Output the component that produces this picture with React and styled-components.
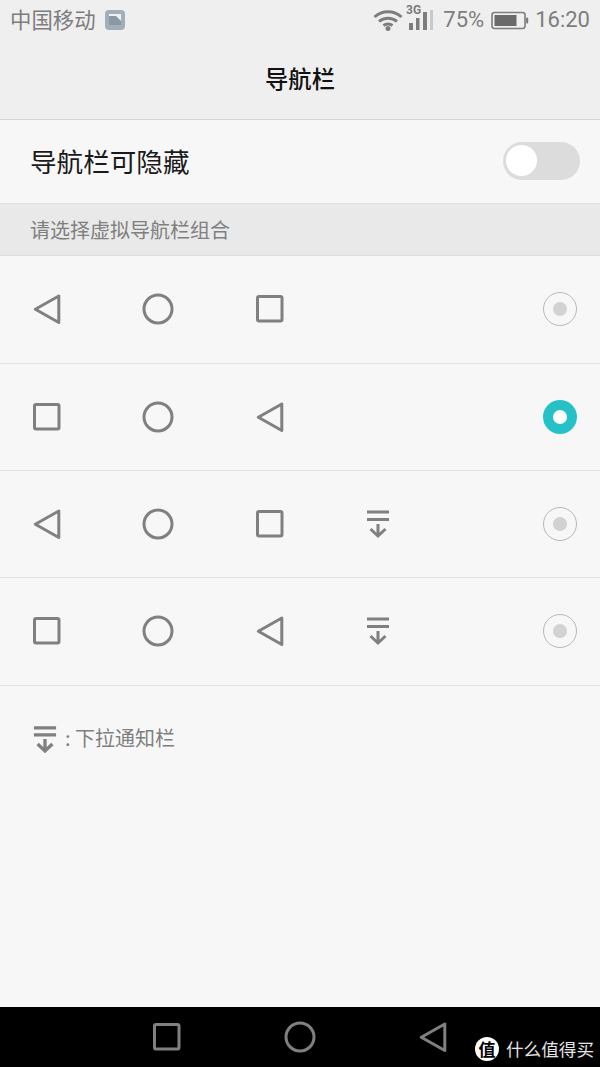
import React from 'react';
import styled, { createGlobalStyle } from 'styled-components';

const FONT = '"Noto Sans CJK SC", "Roboto", "Liberation Sans", sans-serif';

const GlobalStyle = createGlobalStyle`
  html, body {
    margin: 0;
    padding: 0;
    background: #f7f7f7;
    font-family: ${FONT};
  }
`;

const Page = styled.div`
  width: 600px;
  height: 1067px;
  display: flex;
  flex-direction: column;
  overflow: hidden;
  background: #f7f7f7;
`;

const Header = styled.header`
  height: 120px;
  flex: none;
  box-sizing: border-box;
  background: #efefef;
  border-bottom: 1px solid #d6d6d6;
`;

const StatusBar = styled.div`
  height: 40px;
  display: flex;
  align-items: center;
  justify-content: space-between;
  padding: 0 10px 0 10px;
  color: #7d7d7d;
`;

const StatusGroup = styled.div`
  display: flex;
  align-items: center;
`;

const Carrier = styled.span`
  font-size: 21.4px;
  line-height: 38px;
  margin: 0 9px 2px 0;
`;

const StatusText = styled.span`
  font-family: Roboto, "Liberation Sans", sans-serif;
  font-size: 22px;
  line-height: 42px;
  margin-left: ${p => p.$gap}px;
`;

const StatusIcon = styled.span`
  display: flex;
  margin-left: ${p => p.$gap || 0}px;
  margin-top: ${p => p.$top || 0}px;
`;

const Title = styled.h1`
  margin: 0;
  height: 79px;
  line-height: 76px;
  text-align: center;
  font-size: 23.3px;
  font-weight: 500;
  color: #111;
`;

const ToggleRow = styled.div`
  height: 83px;
  flex: none;
  box-sizing: border-box;
  display: flex;
  align-items: center;
  justify-content: space-between;
  padding: 0 20px 1px 30px;
  color: #1a1a1a;
`;

const ToggleLabel = styled.span`
  font-size: 26.6px;
  margin-bottom: 2px;
`;

const Toggle = styled.div`
  width: 77px;
  height: 38px;
  box-sizing: border-box;
  border-radius: 19px;
  background: #dcdcdc;
  padding: 3px;
  display: flex;
`;

const Knob = styled.div`
  width: 31px;
  height: 31px;
  border-radius: 50%;
  background: #fff;
`;

const SectionLabel = styled.div`
  height: 53px;
  flex: none;
  box-sizing: border-box;
  background: #e9e9e9;
  border-top: 1px solid #e0e0e0;
  border-bottom: 1px solid #dedede;
  padding-left: 30px;
  line-height: 52px;
  font-size: 20px;
  color: #7f7f7f;
`;

const Row = styled.div`
  height: ${p => p.$height}px;
  padding-bottom: ${p => p.$height - 107}px;
  flex: none;
  box-sizing: border-box;
  border-bottom: 1px solid #e2e2e2;
  display: grid;
  grid-template-columns: 94px 128px 96px 120px 1fr 80px;
  align-items: center;
  justify-items: center;
`;

const Radio = styled.div`
  grid-column: 6;
  width: 34px;
  height: 34px;
  box-sizing: border-box;
  border-radius: 50%;
  display: flex;
  align-items: center;
  justify-content: center;
  border: ${p => (p.$checked ? 'none' : '1px solid #b8b8b8')};
  background: ${p => (p.$checked ? '#26c0c7' : 'transparent')};
`;

const RadioDot = styled.div`
  width: 14px;
  height: 14px;
  border-radius: 50%;
  background: ${p => (p.$checked ? '#fff' : '#d2d2d2')};
`;

const Legend = styled.div`
  flex: 1;
  display: flex;
  align-items: flex-start;
  padding: 37px 0 0 33px;
  font-size: 20px;
  color: #7f7f7f;
`;

const LegendText = styled.span`
  line-height: 30px;
  margin-left: 8px;
`;

const NavBar = styled.div`
  height: 60px;
  flex: none;
  position: relative;
  box-sizing: border-box;
  padding-left: 100px;
  background: #000;
  display: grid;
  grid-template-columns: 134px 132px 134px;
  align-items: center;
  justify-items: center;
`;

const Watermark = styled.div`
  position: absolute;
  right: 6px;
  bottom: 6px;
  display: flex;
  align-items: center;
  gap: 7px;
  color: #e4e4e4;
  font-size: 17.6px;
  line-height: 24px;
`;

const WatermarkBadge = styled.span`
  width: 24px;
  height: 24px;
  border-radius: 50%;
  background: #fff;
  color: #000;
  font-size: 17px;
  font-weight: 700;
  line-height: 24px;
  text-align: center;
`;

const Back = () => (
  <svg width="32" height="34" viewBox="0 0 32 34">
    <path d="M27.8 4 L27.8 30.5 L4.3 17.2 Z" fill="none" stroke="#808080" strokeWidth="3" strokeLinejoin="round" />
  </svg>
);

const Home = () => (
  <svg width="32" height="32" viewBox="0 0 32 32">
    <circle cx="16" cy="16" r="14" fill="none" stroke="#808080" strokeWidth="3" />
  </svg>
);

const Recent = () => (
  <svg width="28" height="28" viewBox="0 0 28 28">
    <rect x="1.5" y="1.5" width="24.5" height="24.5" rx="1.5" fill="none" stroke="#808080" strokeWidth="3" />
  </svg>
);

const PullDown = ({ bold }) => (
  <svg width={bold ? 24 : 26} height={bold ? 32 : 30} viewBox="0 0 26 30">
    <path
      d={bold ? 'M1 3 H25 M1 10.5 H25 M13 15 V28 M5 20.5 L13 28 L21 20.5' : 'M2 3 H24 M2 10.5 H24 M13 15 V27 M5.5 20 L13 27 L20.5 20'}
      fill="none"
      stroke="#808080"
      strokeWidth={bold ? 3.6 : 3}
    />
  </svg>
);

const Wifi = () => (
  <svg width="30" height="22" viewBox="0 0 30 22">
    <g fill="none" stroke="#7d7d7d" strokeWidth="3">
      <path d="M1.5 8 C9 1 21 1 28.5 8" />
      <path d="M6 12.5 C11 8 19 8 24 12.5" />
      <path d="M10.5 16.5 C13 14.5 17 14.5 19.5 16.5" />
    </g>
    <circle cx="15" cy="19.5" r="2.5" fill="#7d7d7d" />
  </svg>
);

const Signal = () => (
  <svg width="27" height="28" viewBox="0 -4 27 28">
    <text x="0" y="8" fontSize="12" fontWeight="700" fontFamily="Roboto, sans-serif" fill="#7d7d7d">3G</text>
    <rect x="3" y="17" width="4" height="7" fill="#7d7d7d" />
    <rect x="10" y="12" width="3.5" height="12" fill="#7d7d7d" />
    <rect x="17" y="6" width="4" height="18" fill="#7d7d7d" />
    <rect x="24" y="4" width="3" height="20" fill="#c9c9c9" />
  </svg>
);

const Battery = () => (
  <svg width="38" height="20" viewBox="0 0 38 20">
    <rect x="1" y="2.5" width="33" height="16" rx="2.5" fill="none" stroke="#7d7d7d" strokeWidth="1.6" />
    <rect x="3.5" y="5" width="22" height="11" fill="#6a6a6a" />
    <rect x="35" y="7.5" width="2.2" height="6" rx="1" fill="#7d7d7d" />
  </svg>
);

const Gallery = () => (
  <svg width="20" height="20" viewBox="0 0 20 20">
    <rect width="20" height="20" rx="4" fill="#a3afb8" />
    <rect x="4" y="4" width="12" height="11" fill="#eef0f2" />
    <path d="M4 6 L11 6 L16 11 L16 15 L4 15 Z" fill="#8b98a2" />
  </svg>
);

const ICONS = { back: Back, home: Home, recent: Recent, pull: PullDown };

const COMBOS = [
  { icons: ['back', 'home', 'recent'], height: 108, checked: false },
  { icons: ['recent', 'home', 'back'], height: 107, checked: true },
  { icons: ['back', 'home', 'recent', 'pull'], height: 107, checked: false },
  { icons: ['recent', 'home', 'back', 'pull'], height: 108, checked: false },
];

export default function App() {
  return (
    <Page>
      <GlobalStyle />
      <Header>
        <StatusBar>
          <StatusGroup>
            <Carrier>中国移动</Carrier>
            <Gallery />
          </StatusGroup>
          <StatusGroup>
            <Wifi />
            <StatusIcon $gap={3} $top={-8}>
              <Signal />
            </StatusIcon>
            <StatusText $gap={10}>75%</StatusText>
            <StatusIcon $gap={7}>
              <Battery />
            </StatusIcon>
            <StatusText $gap={6}>16:20</StatusText>
          </StatusGroup>
        </StatusBar>
        <Title>导航栏</Title>
      </Header>
      <ToggleRow>
        <ToggleLabel>导航栏可隐藏</ToggleLabel>
        <Toggle>
          <Knob />
        </Toggle>
      </ToggleRow>
      <SectionLabel>请选择虚拟导航栏组合</SectionLabel>
      {COMBOS.map((combo, i) => (
        <Row key={i} $height={combo.height}>
          {combo.icons.map((name, j) => {
            const Icon = ICONS[name];
            return <Icon key={j} />;
          })}
          <Radio $checked={combo.checked}>
            <RadioDot $checked={combo.checked} />
          </Radio>
        </Row>
      ))}
      <Legend>
        <PullDown bold />
        <LegendText>: 下拉通知栏</LegendText>
      </Legend>
      <NavBar>
        <Recent />
        <Home />
        <Back />
        <Watermark>
          <WatermarkBadge>值</WatermarkBadge>
          什么值得买
        </Watermark>
      </NavBar>
    </Page>
  );
}
